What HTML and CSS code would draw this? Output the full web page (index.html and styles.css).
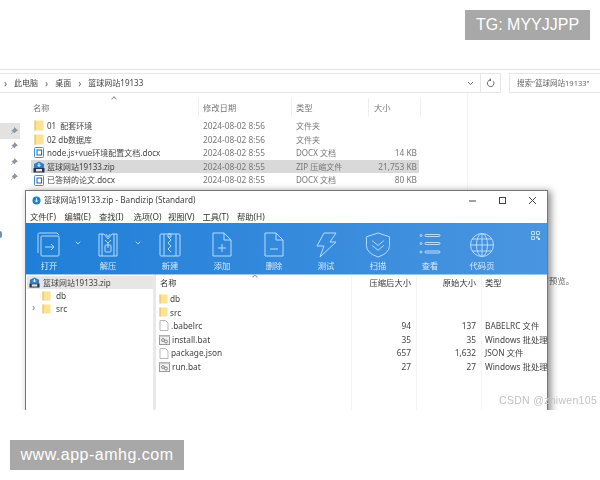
FILE: index.html
```html
<!DOCTYPE html>
<html lang="zh">
<head>
<meta charset="utf-8">
<title>Bandizip</title>
<link rel="stylesheet" href="styles.css">
</head>
<body>
<svg class="defs" width="0" height="0" aria-hidden="true">
  <symbol id="folder" viewBox="0 0 10 11"><rect x="0.5" y="0.5" width="9" height="10" fill="#fbe295"/><rect x="0.5" y="0.5" width="1.4" height="10" fill="#efc869"/></symbol>
  <symbol id="doc" viewBox="0 0 10 11"><rect x="0.5" y="0.5" width="9" height="10" rx="1" fill="#fff" stroke="#3f8fd0"/><rect x="3" y="3" width="4.6" height="5" fill="none" stroke="#1f62a8"/></symbol>
  <symbol id="zip" viewBox="0 0 12 12"><path d="M6 .5 11 3v4H1V3z" fill="#2a7fc4"/><path d="M6 2v3M4.4 3.8 6 5.6l1.6-1.8" stroke="#fff" fill="none"/><rect x=".5" y="7" width="11" height="4.5" fill="#24364f"/><rect x="3" y="8" width="6" height="2.4" fill="#dfe8f2"/></symbol>
  <symbol id="file" viewBox="0 0 9 11"><path d="M.5.5h5.5l2.500 2.500v7.500H.5z" fill="#fff" stroke="#b8b8b8"/></symbol>
  <symbol id="bat" viewBox="0 0 11 10"><rect x=".5" y=".5" width="10" height="9" fill="#f2f2f2" stroke="#9a9a9a"/><rect x=".5" y=".5" width="10" height="1.600" fill="#c9c9c9"/><circle cx="4" cy="5" r="1.500" fill="none" stroke="#888"/><circle cx="7" cy="6.500" r="1.500" fill="none" stroke="#888"/></symbol>
  <symbol id="pin" viewBox="0 0 8 8"><path d="M4.500.5 7.500 3.500 5.800 4 4.500 6 2 3.500 4 2.200zM2.800 5.200.8 7.200" fill="#8b98a6" stroke="#7d8996" stroke-width=".6"/></symbol>
</svg>

<div class="shot">
  <section class="explorer">
    <div class="addressbar">
      <div class="path">
        <span class="crumb-sep">›</span><span>此电脑</span><span class="crumb-sep">›</span><span>桌面</span><span class="crumb-sep">›</span><span>篮球网站19133</span>
        <svg class="path-chevron" width="7" height="5" viewBox="0 0 7 5"><path d="M1 1l2.500 2.500L6 1" fill="none" stroke="#666"/></svg>
      </div>
      <div class="refresh"><svg width="9" height="10" viewBox="0 0 9 10"><path d="M7.200 3.200A3.300 3.300 0 1 1 4.500 2H3.300M4.500 .6V3" fill="none" stroke="#666"/></svg></div>
      <div class="search">搜索"篮球网站19133"</div>
    </div>
    <div class="explorer-body">
      <aside class="quick">
        <div class="pin pin-on"><svg width="8" height="8"><use href="#pin"/></svg></div>
        <div class="pin"><svg width="8" height="8"><use href="#pin"/></svg></div>
        <div class="pin"><svg width="8" height="8"><use href="#pin"/></svg></div>
        <div class="pin"><svg width="8" height="8"><use href="#pin"/></svg></div>
      </aside>
      <div class="files">
        <div class="files-head">
          <span class="h-name">名称<i class="caret"></i></span><span class="h-date">修改日期</span><span class="h-type">类型</span><span class="h-size">大小</span>
        </div>
        <div class="frow"><svg class="ficon" width="10" height="11"><use href="#folder"/></svg><span>01&nbsp; 配套环境</span><span>2024-08-02 8:56</span><span>文件夹</span><span></span></div>
        <div class="frow"><svg class="ficon" width="10" height="11"><use href="#folder"/></svg><span>02 db数据库</span><span>2024-08-02 8:56</span><span>文件夹</span><span></span></div>
        <div class="frow"><svg class="ficon" width="10" height="11"><use href="#doc"/></svg><span>node.js+vue环境配置文档.docx</span><span>2024-08-02 8:55</span><span>DOCX 文档</span><span class="sz">14 KB</span></div>
        <div class="frow frow-sel"><svg class="ficon" width="12" height="12"><use href="#zip"/></svg><span>篮球网站19133.zip</span><span>2024-08-02 8:55</span><span>ZIP 压缩文件</span><span class="sz">21,753 KB</span></div>
        <div class="frow"><svg class="ficon" width="10" height="11"><use href="#doc"/></svg><span>已答辩的论文.docx</span><span>2024-08-02 8:55</span><span>DOCX 文档</span><span class="sz">80 KB</span></div>
      </div>
      <div class="preview">此文件没有预览。</div>
    </div>
  </section>
  <i class="edge-mark"></i>

  <section class="bandizip">
    <header class="titlebar">
      <svg width="9" height="9" viewBox="0 0 10 10"><circle cx="5" cy="5" r="4.500" fill="#1d7fc4"/><path d="M5 2.500v4M3.400 5 5 6.800 6.600 5" fill="none" stroke="#fff"/></svg>
      <span class="title">篮球网站19133.zip - Bandizip (Standard)</span>
      <div class="winctl">
        <svg width="9" height="9" viewBox="0 0 9 9"><path d="M1 5h7" stroke="#444"/></svg>
        <svg width="9" height="9" viewBox="0 0 9 9"><rect x="1.500" y="1.500" width="6" height="6" fill="none" stroke="#444"/></svg>
        <svg width="9" height="9" viewBox="0 0 9 9"><path d="M1 1l7 7M8 1 1 8" stroke="#444"/></svg>
      </div>
    </header>
    <nav class="menubar">
      <span>文件(F)</span><span>编辑(E)</span><span>查找(I)</span><span>选项(O)</span><span>视图(V)</span><span>工具(T)</span><span>帮助(H)</span>
    </nav>
    <div class="toolbar">
      <div class="tool t-open">
        <svg width="24" height="26" viewBox="0 0 24 26"><path d="M1 21V2.500Q1 1 2.500 1H20l2 2"/><rect x="4" y="4" width="18" height="20" rx="1"/><path d="M8 15h9M14 12l3 3-3 3"/></svg>
        <span>打开</span>
      </div>
      <div class="chev"><svg width="6" height="4" viewBox="0 0 6 4"><path d="M.7.700 3 3 5.300.700"/></svg></div>
      <div class="tool t-extract">
        <svg width="24" height="26" viewBox="0 0 24 26"><path d="M3 2h5l4 5 4-5h5v22H3zM6 2v22M18 2v22"/><path d="M10 2l2 3 2-3M9 8l3 3 3-3"/><rect x="9" y="13" width="6" height="7" rx="1"/><path d="M12 11v5"/></svg>
        <span>解压</span>
      </div>
      <div class="chev"><svg width="6" height="4" viewBox="0 0 6 4"><path d="M.7.700 3 3 5.300.700"/></svg></div>
      <div class="tool">
        <svg width="24" height="26" viewBox="0 0 24 26"><rect x="2" y="2" width="20" height="22" rx="1"/><path d="M6 2v22M18 2v22M10 2h3v3h-3zM10 5l3 3-3 3 3 3-3 3 3 3"/></svg>
        <span>新建</span>
      </div>
      <div class="tool">
        <svg width="24" height="26" viewBox="0 0 24 26"><path d="M3 1h11l7 7v16H3zM14 1v7h7M12 12v8M8 16h8"/></svg>
        <span>添加</span>
      </div>
      <div class="tool">
        <svg width="24" height="26" viewBox="0 0 24 26"><path d="M3 1h11l7 7v16H3zM14 1v7h7M8 17h8"/></svg>
        <span>删除</span>
      </div>
      <div class="tool">
        <svg width="24" height="26" viewBox="0 0 24 26"><path d="M10 1h12l-6 9h6L6 25l4-11H3z"/></svg>
        <span>测试</span>
      </div>
      <div class="tool">
        <svg width="28" height="27" viewBox="0 0 28 27"><path d="M14 1l12 4v9q0 8-12 12Q2 22 2 14V5z"/><path d="M8 9l6 5 6-5M8 14l6 5 6-5"/></svg>
        <span>扫描</span>
      </div>
      <div class="tool">
        <svg width="24" height="26" viewBox="0 0 24 26"><circle cx="3" cy="3.500" r="1"/><circle cx="3" cy="11.500" r="1"/><circle cx="3" cy="20" r="1"/><rect x="7" y="2.500" width="15" height="2" rx="1"/><rect x="7" y="10.500" width="15" height="2" rx="1"/><rect x="7" y="19" width="15" height="2" rx="1"/></svg>
        <span>查看</span>
      </div>
      <div class="tool">
        <svg width="26" height="26" viewBox="0 0 26 26"><circle cx="13" cy="13" r="11.500"/><ellipse cx="13" cy="13" rx="5.500" ry="11.500"/><path d="M13 1.500v23M1.500 13h23M3 7h20M3 19h20"/></svg>
        <span>代码页</span>
      </div>
      <svg class="qr" width="9" height="9" viewBox="0 0 9 9"><path d="M.5.500h3v3h-3zM5.500.500h3v3h-3zM.5 5.500h3v3h-3zM5.500 5.500h1.500v1.500h-1.500z"/><path class="qr-solid" d="M7 7h2v2H7z"/></svg>
    </div>
    <div class="panes">
      <aside class="tree">
        <div class="tnode tnode-sel"><svg width="11" height="11"><use href="#zip"/></svg><span>篮球网站19133.zip</span></div>
        <div class="tnode tnode-child"><svg width="9" height="10"><use href="#folder"/></svg><span>db</span></div>
        <div class="tnode tnode-child"><i class="expander">›</i><svg width="9" height="10"><use href="#folder"/></svg><span>src</span></div>
      </aside>
      <div class="splitter"></div>
      <div class="list">
        <div class="lhead"><span>名称<i class="caret caret-list"></i></span><span class="num">压缩后大小</span><span class="num">原始大小</span><span>类型</span></div>
        <div class="lrow"><span class="lname"><svg width="9" height="10"><use href="#folder"/></svg>db</span><span></span><span></span><span></span></div>
        <div class="lrow"><span class="lname"><svg width="9" height="10"><use href="#folder"/></svg>src</span><span></span><span></span><span></span></div>
        <div class="lrow"><span class="lname"><svg width="10" height="11"><use href="#file"/></svg>.babelrc</span><span class="num">94</span><span class="num">137</span><span>BABELRC 文件</span></div>
        <div class="lrow"><span class="lname"><svg width="11" height="10"><use href="#bat"/></svg>install.bat</span><span class="num">35</span><span class="num">35</span><span>Windows 批处理文件</span></div>
        <div class="lrow"><span class="lname"><svg width="10" height="11"><use href="#file"/></svg>package.json</span><span class="num">657</span><span class="num">1,632</span><span>JSON 文件</span></div>
        <div class="lrow"><span class="lname"><svg width="11" height="10"><use href="#bat"/></svg>run.bat</span><span class="num">27</span><span class="num">27</span><span>Windows 批处理文件</span></div>
      </div>
    </div>
  </section>
  <div class="csdn">CSDN @zhiwen105</div>
</div>

<div class="stamp stamp-tg">TG: MYYJJPP</div>
<div class="stamp stamp-url">www.app-amhg.com</div>
</body>
</html>
```
FILE: styles.css
```css
* { box-sizing: border-box; }
html, body { margin: 0; height: 480px; overflow: hidden; background: #fff; }
body { position: relative; font: 8.300px/1.2 "Noto Sans", "Noto Sans CJK SC", sans-serif; color: #444; }
.defs { position: absolute; }
i { font-style: normal; }

.shot { position: relative; height: 410px; overflow: hidden; padding-top: 69px; filter: blur(.4px); }

/* Explorer */
.explorer { border-top: 1px solid #e3e3e3; height: 341px; }
.addressbar { display: flex; height: 23px; padding-top: 3px; }
.addressbar > div { height: 20px; border: 1px solid #e6e6e6; display: flex; align-items: center; }
.path { width: 481px; border-left: 0 !important; padding-left: 4px; gap: 5px; font-size: 8px; color: #444; }
.crumb-sep { color: #666; font-size: 10px; margin-right: 2px; }
.crumb-sep:not(:first-child) { margin-left: 2px; }
.path-chevron { margin-left: auto; margin-right: 6px; }
.refresh { width: 20px; justify-content: center; border-left: 0 !important; }
.search { margin-left: 8px; flex: 1; padding-left: 7px; font-size: 7.500px; color: #666; border-right: 0 !important; }

.explorer-body { display: flex; height: 290px; }
.quick { width: 31px; padding-top: 30px; }
.pin { width: 20px; height: 15.500px; display: flex; align-items: center; justify-content: flex-end; padding-right: 2px; }
.pin-on { background: #e2e2e2; }
.files { width: 437px; padding-top: 5px; border-right: 1px solid #f4f4f4; }
.files-head { display: flex; height: 19px; align-items: center; color: #777; font-size: 8.300px; margin-bottom: 2px; }
.files-head span { border-right: 1px solid #eee; height: 19px; line-height: 19px; position: relative; padding-left: 2px; }
.h-name { width: 168px; }
.h-date { width: 93px; padding-left: 4px !important; }
.h-type { width: 77px; padding-left: 4px !important; }
.h-size { width: 52px; padding-left: 5px !important; }
.caret { position: absolute; left: 81px; top: -1px; width: 4px; height: 4px; border-left: 1px solid #999; border-top: 1px solid #999; transform: rotate(45deg); }

.frow { display: grid; grid-template-columns: 16px 156px 93px 62px 61px; width: 388px; height: 13.600px; line-height: 13.600px; align-items: center; color: #444; white-space: nowrap; font-size: 8px; }
.frow .ficon { margin-left: 3px; }
.frow span:nth-of-type(2) { color: #777; font-size: 8.300px; }
.frow span:nth-of-type(3) { color: #777; }
.frow span:nth-of-type(4) { color: #777; font-size: 8.300px; }
.frow-sel { background: #d9d9d9; }
.frow-sel .ficon { margin-left: 2px; }
.sz { text-align: right; padding-right: 2px; }
.preview { flex: 1; text-align: right; padding: 183px 26px 0 0; color: #666; }
.edge-mark { position: absolute; left: 0; top: 231px; width: 2px; height: 7px; background: #6d93b7; border-radius: 0 3px 3px 0; }

/* Bandizip window */
.bandizip { position: absolute; left: 25px; top: 190px; width: 523px; height: 240px; background: #fff; border: 1px solid #767676; border-bottom: 0; box-shadow: 3px 1px 7px rgba(0, 0, 0, .45); color: #333; }
.titlebar { display: flex; align-items: center; height: 18px; padding: 0 10px 0 6px; gap: 3px; font-size: 8.200px; }
.titlebar .title { color: #444; }
.winctl { margin-left: auto; display: flex; gap: 21px; }
.menubar { display: flex; height: 14px; align-items: center; padding: 1px 0 0 4px; }
.menubar span { width: 34.500px; white-space: nowrap; }
.toolbar { position: relative; display: flex; height: 52px; padding-top: 9px; background: linear-gradient(90deg, #1f7fd8, #4a95e0); border-bottom: 1px solid #8fcbf7; }
.toolbar svg path, .toolbar svg rect, .toolbar svg circle, .toolbar svg ellipse { fill: none; stroke: #b9dcfa; stroke-width: 1; }
.tool { width: 52px; display: flex; flex-direction: column; align-items: center; color: #d6eafc; font-size: 8.300px; gap: 3px; }
.tool svg { height: 26px; }
.t-open { width: 46px; }
.t-extract { width: 48px; }
.chev { width: 12px; padding-top: 9px; display: flex; justify-content: center; }
.qr { position: absolute; right: 7px; top: 8px; }
.toolbar svg .qr-solid { fill: #cfe6fb; stroke: none; }

.panes { display: flex; height: 170px; }
.tree { flex: none; width: 127px; padding-top: 1px; font-size: 8px; }
.tnode { position: relative; display: flex; align-items: center; gap: 3px; height: 13px; white-space: nowrap; color: #444; }
.tnode-sel { background: #e6e6e6; margin-left: 1px; padding-left: 2px; }
.tnode-child { padding-left: 16px; gap: 4px; font-size: 8.300px; }
.tnode-child span { margin-left: 1px; }
.expander { position: absolute; left: 6px; top: -1px; color: #888; font-size: 10px; }
.splitter { flex: none; width: 3px; background: #e9e9e9; }
.list { flex: 1; min-width: 0; padding-left: 3px; overflow: hidden;
  background-image: linear-gradient(#f4f4f4, #f4f4f4), linear-gradient(#f4f4f4, #f4f4f4), linear-gradient(#f4f4f4, #f4f4f4);
  background-size: 1px 100%; background-repeat: no-repeat; background-position: 195px 0, 260px 0, 325px 0; }
.lhead, .lrow { display: grid; grid-template-columns: 192px 65px 65px 67px; white-space: nowrap; overflow: hidden; width: 389px; }
.lhead { height: 17px; line-height: 16px; position: relative; padding-left: 1px; grid-template-columns: 191px 65px 65px 67px; }
.lrow { height: 13.600px; line-height: 13.600px; color: #444; }
.lrow > span:last-child, .lhead > span:last-child { padding-left: 4px; overflow: hidden; }
.lname { display: flex; align-items: center; gap: 2px; }
.lname svg { flex: none; }
.num { text-align: right; padding-right: 5px; }
.caret-list { left: 94px; top: 0; }

.csdn { position: absolute; left: 499px; top: 392px; font: 10.500px/16px "Liberation Sans", sans-serif; letter-spacing: .3px; color: #c2c2c2; white-space: nowrap; }

.stamp { position: absolute; background: #a8a8a8; color: #fff; font-family: "Liberation Sans", sans-serif; font-size: 16px; height: 30px; line-height: 30px; text-align: center; white-space: nowrap; }
.stamp-tg { left: 465px; top: 10px; width: 125px; }
.stamp-url { left: 10px; top: 440px; width: 174px; letter-spacing: .5px; }
```
